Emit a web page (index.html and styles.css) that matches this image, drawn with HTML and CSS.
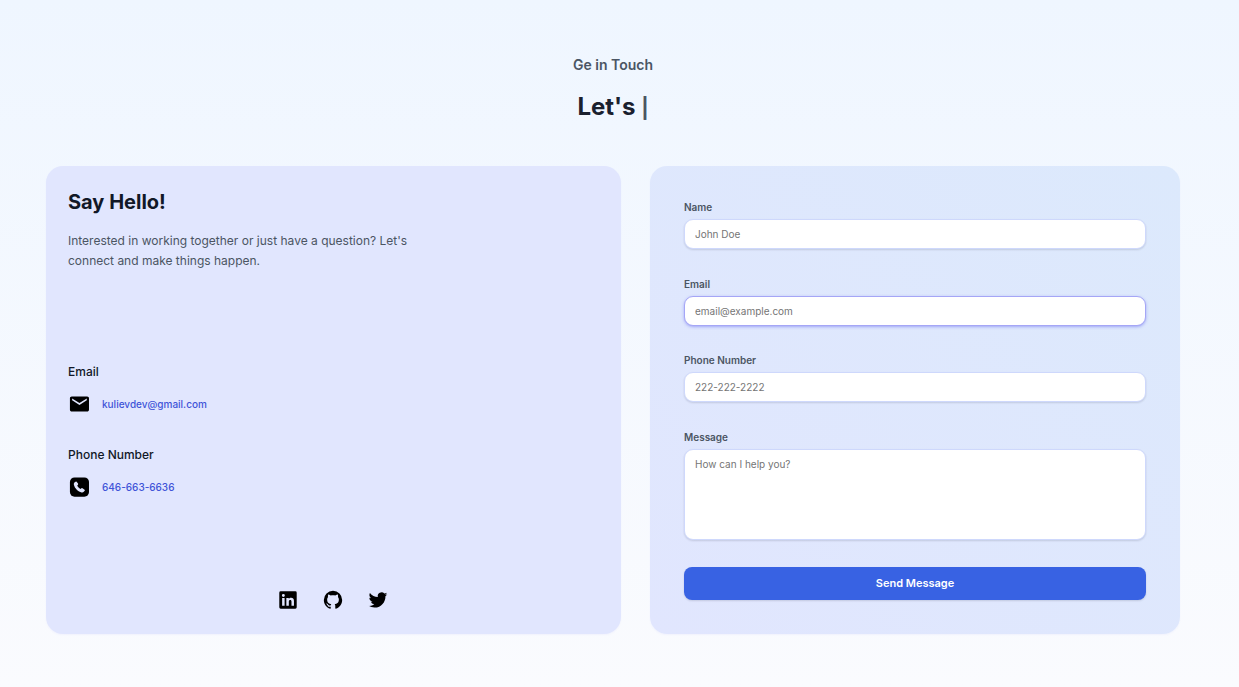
FILE: index.html
```html
<!DOCTYPE html>
<html lang="en">
<head>
<meta charset="utf-8">
<meta name="viewport" content="width=device-width, initial-scale=1">
<title>Get in Touch</title>
<link rel="stylesheet" href="styles.css">
</head>
<body>
<main class="contact">
  <header class="heading">
    <p class="eyebrow">Ge in Touch</p>
    <h1 class="title">Let's <span class="cursor">|</span></h1>
  </header>
  <div class="panels">
    <section class="card info">
      <div class="intro">
        <h2 class="intro-title">Say Hello!</h2>
        <p class="intro-text">Interested in working together or just have a question? Let's connect and make things happen.</p>
      </div>
      <div class="details">
        <div class="detail">
          <h3 class="detail-title">Email</h3>
          <div class="detail-row">
            <svg class="icon" viewBox="0 0 24 24" aria-hidden="true"><path d="M20.900 3.700H4.100C3 3.700 2.100 4.600 2.100 5.700v12.600c0 1.100.9 2 2 2h16.800c1.100 0 2-.9 2-2V5.700c0-1.100-.9-2-2-2zm-.4 4.300l-8 5-8-5V6l8 5 8-5v2z"/></svg>
            <a class="link" href="mailto:kulievdev@gmail.com">kulievdev@gmail.com</a>
          </div>
        </div>
        <div class="detail">
          <h3 class="detail-title">Phone Number</h3>
          <div class="detail-row">
            <svg class="icon" viewBox="0 0 24 24" aria-hidden="true"><rect x="2.100" y="1.500" width="20.800" height="21" rx="5"/><path class="cutout" d="M8.200 6.200 7 7.200c-.6.6-.8 1.500-.6 2.400.5 2 1.600 3.900 3.200 5.400 1.500 1.500 3.400 2.600 5.300 3 .9.200 1.700-.1 2.300-.7l1-1.100c.3-.4.300-.9-.1-1.200l-2.300-1.700a.9.9 0 0 0-1.100 0l-1.200.9c-1.500-.8-2.700-2-3.500-3.500l.9-1.200c.3-.3.300-.8 0-1.200L9.400 6.300a.8.8 0 0 0-1.200-.1z"/></svg>
            <a class="link" href="tel:6466636636">646-663-6636</a>
          </div>
        </div>
      </div>
      <nav class="social" aria-label="Social profiles">
        <a class="social-link" href="#linkedin" aria-label="LinkedIn"><svg class="icon" viewBox="0 0 24 24"><path fill-rule="evenodd" d="M4 2.500h16A1.500 1.500 0 0 1 21.500 4v16a1.500 1.500 0 0 1-1.500 1.500H4A1.500 1.500 0 0 1 2.500 20V4A1.500 1.500 0 0 1 4 2.500zM5.600 9.800v8.400h2.700V9.800zM6.950 5.500a1.600 1.600 0 1 0 0 3.200 1.600 1.600 0 0 0 0-3.200zM10.200 9.800v8.400h2.700v-4.400c0-1.200.5-1.900 1.500-1.900s1.400.7 1.400 1.900v4.400h2.700v-5c0-2.400-1.200-3.600-3.100-3.600-1.200 0-2 .6-2.500 1.400V9.800z"/></svg></a>
        <a class="social-link" href="#github" aria-label="GitHub"><svg class="icon" viewBox="0 0 24 24"><path d="M12 2A10 10 0 0 0 2 12c0 4.420 2.870 8.170 6.840 9.500.5.080.66-.23.660-.5v-1.690c-2.770.6-3.360-1.340-3.360-1.340-.46-1.160-1.110-1.470-1.110-1.470-.91-.62.070-.6.070-.6 1 .07 1.530 1.030 1.530 1.030.87 1.520 2.340 1.070 2.910.83.090-.65.350-1.090.63-1.340-2.220-.25-4.550-1.110-4.550-4.920 0-1.110.38-2 1.030-2.710-.1-.25-.45-1.290.1-2.640 0 0 .84-.27 2.750 1.020.79-.22 1.650-.33 2.500-.33s1.710.11 2.500.33c1.910-1.290 2.750-1.020 2.750-1.020.55 1.350.2 2.390.1 2.640.65.71 1.030 1.600 1.030 2.710 0 3.820-2.340 4.660-4.570 4.910.36.310.69.920.69 1.850V21c0 .27.160.59.670.5C19.140 20.160 22 16.420 22 12A10 10 0 0 0 12 2z"/></svg></a>
        <a class="social-link" href="#twitter" aria-label="Twitter"><svg class="icon" viewBox="0 0 24 24"><path d="M22.162 5.656a8.384 8.384 0 0 1-2.402.658A4.196 4.196 0 0 0 21.600 4c-.82.488-1.719.83-2.656 1.015a4.182 4.182 0 0 0-7.126 3.814 11.874 11.874 0 0 1-8.620-4.370 4.168 4.168 0 0 0-.566 2.103c0 1.450.738 2.731 1.860 3.481a4.168 4.168 0 0 1-1.894-.523v.052a4.185 4.185 0 0 0 3.355 4.101 4.210 4.210 0 0 1-1.890.072A4.185 4.185 0 0 0 7.970 16.650a8.394 8.394 0 0 1-6.191 1.732 11.830 11.830 0 0 0 6.410 1.880c7.693 0 11.900-6.373 11.900-11.900 0-.18-.005-.362-.013-.54a8.496 8.496 0 0 0 2.087-2.165z"/></svg></a>
      </nav>
    </section>
    <form class="card form" action="#">
      <div class="field">
        <label class="label" for="name">Name</label>
        <input class="control" id="name" type="text" placeholder="John Doe">
      </div>
      <div class="field">
        <label class="label" for="email">Email</label>
        <input class="control control-active" id="email" type="email" placeholder="email@example.com">
      </div>
      <div class="field">
        <label class="label" for="phone">Phone Number</label>
        <input class="control" id="phone" type="tel" placeholder="222-222-2222">
      </div>
      <div class="field">
        <label class="label" for="message">Message</label>
        <textarea class="control message" id="message" placeholder="How can I help you?"></textarea>
      </div>
      <button class="submit" type="submit">Send Message</button>
    </form>
  </div>
</main>
</body>
</html>
```
FILE: styles.css
```css
* {
  box-sizing: border-box;
}

body {
  margin: 0;
  min-height: 100vh;
  font-family: Inter, "Liberation Sans", sans-serif;
  color: #111827;
  background: linear-gradient(to bottom, #eff6ff, #fafbfe);
}

h1, h2, h3, p {
  margin: 0;
}

.contact {
  padding: 54px 59px 53px 46px;
}

.heading {
  text-align: center;
  margin-bottom: 42px;
}

.eyebrow {
  font-size: 14px;
  line-height: 22px;
  font-weight: 600;
  color: #4b5563;
}

.title {
  margin-top: 14px;
  font-size: 24px;
  line-height: 34px;
  font-weight: 700;
  color: #1a202e;
}

.cursor {
  font-size: 20px;
  line-height: 20px;
  font-weight: 700;
  color: #4b5563;
}

.panels {
  display: grid;
  grid-template-columns: 575fr 530fr;
  gap: 29px;
  min-height: 468px;
}

.card {
  border-radius: 17px;
  box-shadow: 0 1px 2px rgba(99, 102, 241, 0.06);
}

.info {
  display: flex;
  flex-direction: column;
  justify-content: space-between;
  padding: 22px 23px 23px 22px;
  background: #e1e6fe;
}

.intro {
  max-width: 360px;
}

.intro-title {
  font-size: 20px;
  line-height: 28px;
  font-weight: 700;
}

.intro-text {
  margin-top: 15px;
  font-size: 12px;
  line-height: 20px;
  color: #4b5563;
}

.details {
  display: grid;
  gap: 30px;
}

.detail-title {
  font-size: 12px;
  line-height: 20px;
  font-weight: 500;
}

.detail-row {
  display: flex;
  align-items: center;
  gap: 12px;
  margin-top: 11px;
}

.icon {
  display: block;
  width: 22px;
  height: 22px;
  fill: #000;
}

.cutout {
  fill: #e1e6fe;
}

.link {
  font-size: 10px;
  line-height: 14px;
  font-weight: 500;
  color: #4054d8;
  text-decoration: none;
}

.social {
  display: flex;
  justify-content: center;
  gap: 23px;
}

.form {
  display: grid;
  align-content: space-between;
  gap: 20px;
  padding: 34px;
  background: linear-gradient(to top right, #e1e6fe, #dce9fc);
}

.field {
  display: grid;
  gap: 4px;
}

.label {
  font-size: 10px;
  line-height: 15px;
  font-weight: 600;
  color: #4b5563;
}

.control {
  display: block;
  width: 100%;
  height: 30px;
  padding: 7px 10px;
  border: 1px solid #ced8fc;
  border-radius: 9px;
  background: #fff;
  font: inherit;
  font-size: 10px;
  line-height: 14px;
  color: #111827;
  outline: none;
  box-shadow: 0 1px 2px rgba(15, 23, 42, 0.14);
}

.control::placeholder {
  color: #757575;
  opacity: 1;
}

.control-active {
  border-color: #a5a6f6;
  box-shadow: 0 1px 3px rgba(99, 102, 241, 0.5);
}

.message {
  height: 91px;
  resize: none;
}

.submit {
  padding: 8px;
  border: 0;
  border-radius: 8px;
  background: #3862e3;
  font: inherit;
  font-size: 11px;
  line-height: 17px;
  font-weight: 600;
  color: #fff;
  box-shadow: 0 1px 2px rgba(15, 23, 42, 0.14);
}
```
